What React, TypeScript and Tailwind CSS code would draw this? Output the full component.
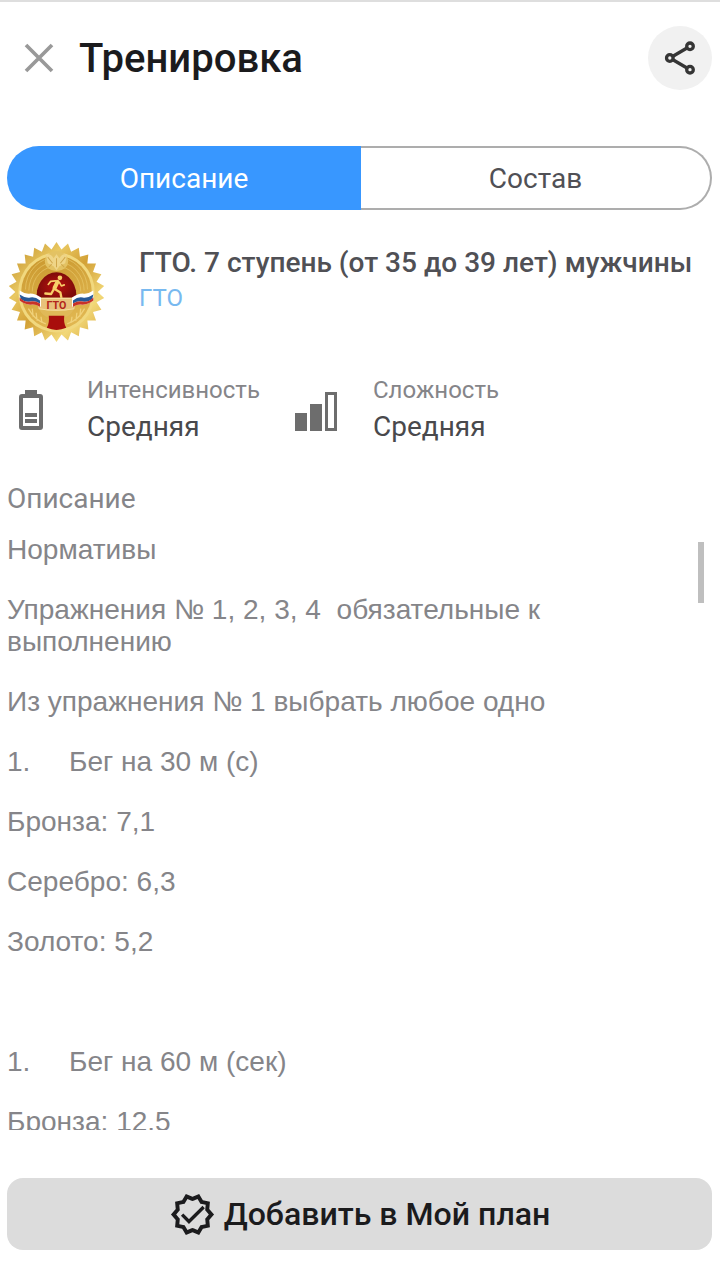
import React from "react";

const teeth = 26;
const sunburst = Array.from({ length: teeth * 2 }, (_, i) => {
  const a = (Math.PI * i) / teeth - Math.PI / 2;
  const r = i % 2 === 0 ? 49.5 : 42.5;
  return `${(50 + r * Math.cos(a)).toFixed(2)},${(50.5 + r * Math.sin(a)).toFixed(2)}`;
}).join(" ");

function Medal() {
  return (
    <svg className="ml-px h-[101px] w-[97px] shrink-0" viewBox="0 0 100 100" preserveAspectRatio="none">
      <defs>
        <linearGradient id="gold" x1="0" y1="0" x2="1" y2="1">
          <stop offset="0" stopColor="#bd8923" />
          <stop offset="0.3" stopColor="#e9c862" />
          <stop offset="0.5" stopColor="#d3a136" />
          <stop offset="0.75" stopColor="#f2d878" />
          <stop offset="1" stopColor="#d5a136" />
        </linearGradient>
        <linearGradient id="disc" x1="0" y1="0" x2="0.3" y2="1">
          <stop offset="0" stopColor="#c9962c" />
          <stop offset="0.5" stopColor="#d5a73f" />
          <stop offset="1" stopColor="#e0b650" />
        </linearGradient>
        <radialGradient id="red">
          <stop offset="0" stopColor="#b9130e" />
          <stop offset="1" stopColor="#7d0b0a" />
        </radialGradient>
      </defs>
      <polygon points={sunburst} fill="url(#gold)" />
      <circle cx="50" cy="51" r="39.5" fill="#f1d87e" />
      <circle cx="50" cy="51" r="36.5" fill="url(#disc)" />
      <g fill="none" stroke="#e5c364" strokeWidth="0.8">
        <path d="M18 48a32 32 0 0 1 64 0M21.500 49a28.500 28.500 0 0 1 57 0M25 50a25 25 0 0 1 50 0" />
      </g>
      <path d="M30 59a20.500 23 0 1 1 40 0z" fill="url(#red)" />
      <ellipse cx="50" cy="20" rx="12" ry="10" fill="#e3c263" />
      <path d="M39 13q5-1 8 4l3-4 3 4q3-5 8-4l-2 9-6 3-3 4-3-4-6-3z" fill="#efd587" />
      <path d="M41 16l5 6m13-6l-5 6m-4-5v9m-5-3l-3 3m13-3l3 3" stroke="#cfa64a" strokeWidth="1" fill="none" />
      <circle cx="53.500" cy="36.500" r="2.400" fill="#f7cf69" />
      <g fill="none" stroke="#f7cf69" strokeLinecap="round" strokeLinejoin="round">
        <path d="M51 40.500l-3 6" strokeWidth="4.200" />
        <path d="M49 39.500l-5 .5-2.500 3M53 41l2 3.500 3-1" strokeWidth="1.700" />
        <path d="M49 48l5 3 1 5M47 48l-2.500 4.500-6-.5" strokeWidth="2.400" />
      </g>
      <path d="M32 67h36q-3 8-12 9H44q-9-1-12-9z" fill="#e0b958" />
      <path d="M42 74h16q-1 7 2 12q-10 4-20 0 3-5 2-12z" fill="#a80e0c" />
      <path d="M31 56h38v11q-19 4-38 0z" fill="#e8c27b" />
      <path d="M31 57h38M32 67q18 3 36 0" fill="none" stroke="#f5df9d" strokeWidth="1" />
      <path d="M12 49q6 4 11 3 5 0 11 4v9q-6-3-11-2-6 0-11-4z" fill="#fff" />
      <path d="M12 53q6 4 11 3 5-1 10 3v3q-5-3-10-2-6 1-10-3z" fill="#275997" />
      <path d="M12 56q5 5 11 4 5-1 10 2v3q-5-3-10-2-6 0-11-4z" fill="#c83228" />
      <path d="M88 49q-6 4-11 3-5 0-11 4v9q6-3 11-2 6 0 11-4z" fill="#fff" />
      <path d="M88 53q-6 4-11 3-5-1-10 3v3q5-3 10-2 6 1 10-3z" fill="#275997" />
      <path d="M88 56q-5 5-11 4-5-1-10 2v3q5-3 10-2 6 0 11-4z" fill="#c83228" />
      <text x="50" y="67" textAnchor="middle" fontFamily="Roboto, sans-serif" fontWeight="700" fontSize="11" fill="#b3261c">ГТО</text>
      <path d="M21 67q7 12 18 15M79 67q-7 12-18 15M25 67l1 8m3-4l1 8m4-4l1 6M75 67l-1 8m-3-4l-1 8m-4-4l-1 6" fill="none" stroke="#f0d17a" strokeWidth="1.300" />
    </svg>
  );
}

function Metric({ label, value, className }: { label: string; value: string; className: string }) {
  return (
    <div className={className}>
      <div className="text-[24px] leading-8 text-[#858589]">{label}</div>
      <div className="mt-[3px] text-[28px] leading-9 text-[#49494c]">{value}</div>
    </div>
  );
}

export default function App() {
  return (
    <main className="flex h-[1280px] w-[720px] flex-col overflow-hidden border-t-2 border-[#dedede] bg-white px-[7px] font-['Roboto',sans-serif]">
      <header className="flex h-[112px] shrink-0 items-center pl-[17px]">
        <svg className="size-[30px] shrink-0" viewBox="0 0 30 30" stroke="#999" strokeWidth="3.700">
          <path d="M2 2l26 26M28 2L2 28" />
        </svg>
        <h1 className="ml-[25px] pt-0.5 text-[40.100px] leading-[48px] font-medium text-[#1b1b1d]">Тренировка</h1>
        <button className="mr-px ml-auto flex size-16 items-center justify-center rounded-full bg-[#f1f1f1]" aria-label="Поделиться">
          <svg className="size-9" viewBox="0 0 36 36" fill="none" stroke="#353535" strokeWidth="3.300">
            <path d="M10.500 16.500L25 8M10.500 19.500L25 28" />
            <circle cx="7.800" cy="18" r="3.300" /><circle cx="28" cy="6.300" r="3.300" /><circle cx="28" cy="29.700" r="3.300" />
          </svg>
        </button>
      </header>
      <div className="mt-8 flex h-16 w-[705px] shrink-0 text-[28px]">
        <button className="w-[354px] rounded-l-full bg-[#3897ff] pt-0.5 text-white">Описание</button>
        <button className="flex-1 rounded-r-full border-2 border-l-0 border-[#adadad] pt-0.5 text-[#505055]">Состав</button>
      </div>
      <section className="mt-[31px] flex h-[101px] shrink-0">
        <Medal />
        <div className="ml-[34px] mt-1 whitespace-nowrap">
          <h2 className="text-[28.050px] leading-9 font-medium text-[#505055]">ГТО. 7 ступень (от 35 до 39 лет) мужчины</h2>
          <div className="-mt-px text-[24px] leading-9 text-[#78b9f0]">ГТО</div>
        </div>
      </section>
      <section className="mt-8 flex h-[76px] shrink-0 pl-3">
        <svg className="mt-4 h-10 w-6" viewBox="0 0 24 40" fill="#6d6d6d">
          <path fillRule="evenodd" d="M6 0h12v4h3q3 0 3 3v30q0 3-3 3H3q-3 0-3-3V7q0-3 3-3h3zM4 8v28h16V8z" />
          <path d="M6 23h12v4H6zM6 29h12v4H6z" />
        </svg>
        <Metric className="ml-11 w-[208px]" label="Интенсивность" value="Средняя" />
        <svg className="mt-[18px] h-[39px] w-[42px]" viewBox="0 0 42 39" fill="#6d6d6d">
          <path d="M0 21h12v18H0zM15 12h12v27H15z" />
          <path fillRule="evenodd" d="M30 0h12v39H30zM33 3v33h6V3z" />
        </svg>
        <Metric className="ml-9" label="Сложность" value="Средняя" />
      </section>
      <h3 className="mt-[33px] text-[28px] leading-8 text-[#858589]">Описание</h3>
      <section className="mt-[19px] flex h-[596px] shrink-0 justify-between overflow-hidden font-['Liberation_Sans',sans-serif] text-[28.050px] leading-8 text-[#858589]">
        <div className="w-[600px] space-y-7 whitespace-pre-wrap">
          <p>Нормативы</p>
          <p>{"Упражнения № 1, 2, 3, 4  обязательные к\nвыполнению"}</p>
          <p>Из упражнения № 1 выбрать любое одно</p>
          <p className="flex"><span className="w-[62px]">1.</span>Бег на 30 м (с)</p>
          <p>Бронза: 7,1</p>
          <p>Серебро: 6,3</p>
          <p>Золото: 5,2</p>
          <p className="mt-[88px] flex"><span className="w-[62px]">1.</span>Бег на 60 м (сек)</p>
          <p>Бронза: 12.5</p>
        </div>
        <div className="mr-[9px] mt-2 h-[61px] w-1.5 bg-[#bfbfbf]" />
      </section>
      <button className="mt-12 flex h-[72px] w-[705px] shrink-0 items-center justify-center gap-2 rounded-2xl bg-[#dcdcdc] text-[32.100px] font-medium text-[#1b1b1d]">
        <svg className="size-[47px]" viewBox="0 0 24 24" fill="currentColor">
          <path d="M23 11.990l-2.440-2.790.34-3.690-3.610-.82L15.400 1.500 12 2.960 8.600 1.500 6.710 4.690 3.100 5.500l.34 3.700L1 11.990l2.440 2.790-.34 3.700 3.610.82 1.890 3.200 3.400-1.470 3.400 1.460 1.890-3.190 3.610-.82-.34-3.690zM19.050 13.470l-.56.65.08.85.18 1.950-1.900.43-.84.190-.44.740-.990 1.680-1.780-.77-.8-.34-.79.340-1.780.770-.990-1.670-.440-.740-.840-.190-1.900-.430.180-1.960.080-.850-.560-.650L3.670 12l1.290-1.480.560-.650-.090-.860-.180-1.940 1.900-.430.840-.190.440-.740.990-1.680 1.780.770.800.340.790-.340 1.780-.770.990 1.680.440.740.840.190 1.900.430-.180 1.950-.080.850.560.650 1.290 1.470z" />
          <path d="M6.700 12.100l3.500 3.500 7.500-7.400" fill="none" stroke="currentColor" strokeWidth="1.700" />
        </svg>
        <span>Добавить в Мой план</span>
      </button>
    </main>
  );
}
